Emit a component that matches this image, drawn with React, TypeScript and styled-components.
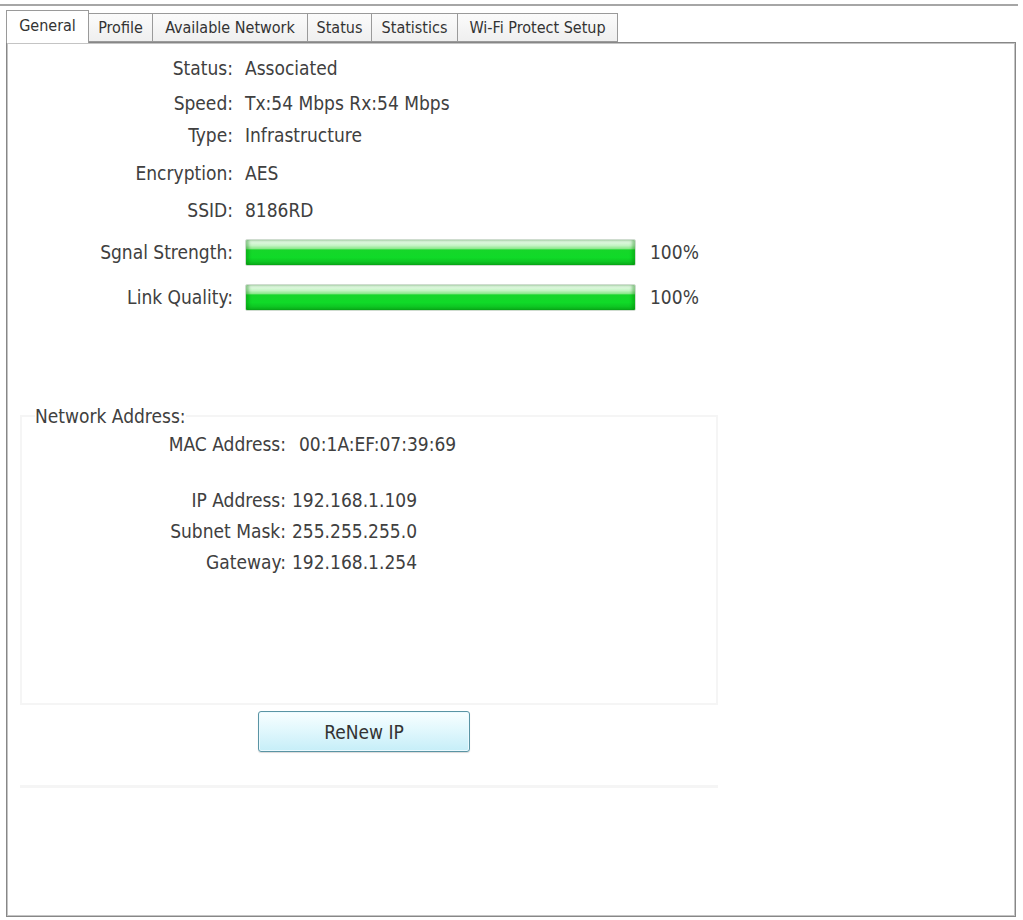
import React from "react";
import styled, { createGlobalStyle } from "styled-components";

const Global = createGlobalStyle`
  html, body { margin: 0; padding: 0; background: #ffffff; }
  body {
    font-family: "DejaVu Sans Condensed", "DejaVu Sans", "Liberation Sans", sans-serif;
    font-stretch: condensed;
    color: #404040;
  }
`;

const Window = styled.div`
  width: 1023px;
  height: 920px;
  display: flex;
  flex-direction: column;
  background: #ffffff;
`;

const TopRule = styled.div`
  margin-top: 4px;
  width: 1018px;
  height: 2px;
  background: #a6a6a6;
`;

const TabStrip = styled.div`
  display: flex;
  align-items: flex-end;
  height: 36px;
  padding-left: 6px;
  position: relative;
  z-index: 1;
`;

const Tab = styled.div<{ $w: number; $active?: boolean }>`
  width: ${(p) => p.$w}px;
  height: ${(p) => (p.$active ? 33 : 29)}px;
  margin-bottom: ${(p) => (p.$active ? -1 : 0)}px;
  margin-left: -1px;
  box-sizing: border-box;
  display: flex;
  align-items: center;
  justify-content: center;
  font-size: 16px;
  color: #333333;
  border: 1px solid #9a9a9a;
  border-bottom: ${(p) => (p.$active ? "none" : "1px solid #9a9a9a")};
  background: ${(p) =>
    p.$active ? "#ffffff" : "linear-gradient(#fbfbfb, #efefef)"};
  padding-bottom: ${(p) => (p.$active ? 4 : 0)}px;
  &:first-child { margin-left: 0; }
`;

const Panel = styled.div`
  margin-left: 6px;
  width: 1010px;
  height: 875px;
  box-sizing: border-box;
  border: 1px solid #878787;
  box-shadow: inset 1px 1px 0 #c4c4c4, inset -1px -1px 0 #c4c4c4;
  display: flex;
  flex-direction: column;
`;

const InfoRow = styled.div<{ $top: number }>`
  display: grid;
  grid-template-columns: 226px auto;
  column-gap: 12px;
  align-items: center;
  height: 22px;
  margin-top: ${(p) => p.$top}px;
  font-size: 19px;
`;

const Label = styled.span`
  text-align: right;
  white-space: nowrap;
`;

const Value = styled.span<{ $shift?: number }>`
  white-space: nowrap;
  margin-left: ${(p) => p.$shift ?? 0}px;
`;

const BarRow = styled.div<{ $top: number }>`
  display: grid;
  grid-template-columns: 226px 391px auto;
  column-gap: 12px;
  align-items: center;
  height: 28px;
  margin-top: ${(p) => p.$top}px;
  font-size: 19px;
`;

const Bar = styled.div`
  height: 27px;
  box-sizing: border-box;
  border: 1px solid #cfdccf;
  border-radius: 2px;
  background: #e6f6e6;
  overflow: hidden;
  display: flex;
`;

const BarFill = styled.div`
  height: 100%;
  background: linear-gradient(
    #f2fcf2 0%,
    #c4f4c4 22%,
    #8ee88e 34%,
    #16d62a 40%,
    #10da28 70%,
    #0cb61e 100%
  );
  box-shadow: inset 3px 0 3px rgba(0, 120, 0, 0.35), inset -3px 0 3px rgba(0, 120, 0, 0.35);
`;

const Percent = styled.span`
  margin-left: 2px;
`;

const Group = styled.fieldset`
  margin: 94px 0 0 13px;
  width: 698px;
  height: 300px;
  box-sizing: border-box;
  padding: 0;
  border: 2px solid #f5f5f5;
  display: flex;
  flex-direction: column;
`;

const Legend = styled.legend`
  margin-left: 13px;
  padding: 0;
  font-size: 19px;
  height: 22px;
  line-height: 22px;
`;

const AddrRow = styled.div<{ $top: number }>`
  display: grid;
  grid-template-columns: 264px auto;
  column-gap: 6px;
  align-items: center;
  height: 22px;
  margin-top: ${(p) => p.$top}px;
  font-size: 19px;
`;

const RenewButton = styled.button`
  margin: 6px 0 0 251px;
  width: 212px;
  height: 41px;
  box-sizing: border-box;
  border: 1px solid #5a94a4;
  border-radius: 3px;
  background: linear-gradient(#f8feff 0%, #e2f8fd 45%, #c6eef8 100%);
  box-shadow: inset 0 0 0 1px #eafaff, 0 1px 1px rgba(0, 0, 0, 0.15);
  font-family: inherit;
  font-stretch: condensed;
  font-size: 19px;
  color: #333333;
  padding: 0;
`;

const FaintRule = styled.div`
  margin: 33px 0 0 13px;
  width: 698px;
  height: 3px;
  background: #f5f5f5;
`;

const tabs = [
  { label: "General", w: 83, active: true },
  { label: "Profile", w: 65 },
  { label: "Available Network", w: 156 },
  { label: "Status", w: 65 },
  { label: "Statistics", w: 87 },
  { label: "Wi-Fi Protect Setup", w: 161 },
];

const info = [
  { label: "Status:", value: "Associated", top: 14 },
  { label: "Speed:", value: "Tx:54 Mbps Rx:54 Mbps", top: 13 },
  { label: "Type:", value: "Infrastructure", top: 10 },
  { label: "Encryption:", value: "AES", top: 16 },
  { label: "SSID:", value: "8186RD", top: 15 },
];

const bars = [
  { label: "Sgnal Strength:", pct: 100, top: 17 },
  { label: "Link Quality:", pct: 100, top: 17 },
];

const addrs = [
  { label: "MAC Address:", value: "00:1A:EF:07:39:69", top: 6, shift: 7 },
  { label: "IP Address:", value: "192.168.1.109", top: 34 },
  { label: "Subnet Mask:", value: "255.255.255.0", top: 9 },
  { label: "Gateway:", value: "192.168.1.254", top: 9 },
];

export default function App() {
  return (
    <>
      <Global />
      <Window>
        <TopRule />
        <TabStrip>
          {tabs.map((t) => (
            <Tab key={t.label} $w={t.w} $active={t.active}>
              {t.label}
            </Tab>
          ))}
        </TabStrip>
        <Panel>
          {info.map((r) => (
            <InfoRow key={r.label} $top={r.top}>
              <Label>{r.label}</Label>
              <Value>{r.value}</Value>
            </InfoRow>
          ))}
          {bars.map((b) => (
            <BarRow key={b.label} $top={b.top}>
              <Label>{b.label}</Label>
              <Bar>
                <BarFill style={{ width: `${b.pct}%` }} />
              </Bar>
              <Percent>{b.pct}%</Percent>
            </BarRow>
          ))}
          <Group>
            <Legend>Network Address:</Legend>
            {addrs.map((a) => (
              <AddrRow key={a.label} $top={a.top}>
                <Label>{a.label}</Label>
                <Value $shift={a.shift}>{a.value}</Value>
              </AddrRow>
            ))}
          </Group>
          <RenewButton>ReNew IP</RenewButton>
          <FaintRule />
        </Panel>
      </Window>
    </>
  );
}
